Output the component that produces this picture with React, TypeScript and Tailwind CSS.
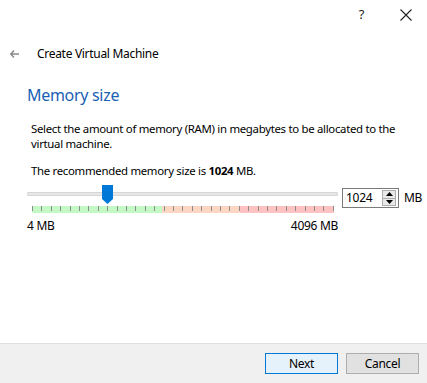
import React from 'react';

const TICKS = Array.from({ length: 33 }, (_, i) => i);

const SpinBox: React.FC<{ value: string }> = ({ value }) => (
  <div className="flex h-[20px] w-[57px] items-center border border-[#7a7a7a] bg-white pl-[3px]">
    <span className="flex-1 text-[12px] leading-none text-black">{value}</span>
    <div className="mr-[2px] flex h-[16px] w-[14px] flex-col border border-[#adadad] bg-[#e8e8e8]">
      <div className="flex flex-1 items-center justify-center border-b border-[#adadad]">
        <svg width="7" height="4" viewBox="0 0 7 4">
          <path d="M0 4 L3.5 0 L7 4 Z" fill="#000" />
        </svg>
      </div>
      <div className="flex flex-1 items-center justify-center">
        <svg width="7" height="4" viewBox="0 0 7 4">
          <path d="M0 0 L7 0 L3.5 4 Z" fill="#000" />
        </svg>
      </div>
    </div>
  </div>
);

const MemorySlider: React.FC<{ value: number; min: number; max: number }> = ({ value, min, max }) => {
  const barWidth = 302;
  const handleLeft = 5 + ((value - min) / (max - min)) * barWidth - 5.5;

  return (
    <div className="relative w-[312px]">
      <div className="h-[4px] w-[311px] rounded-[1px] border border-[#d6d6d6] bg-[#e7e7e7]" />
      <svg
        className="absolute top-[-7px]"
        style={{ left: handleLeft }}
        width="11"
        height="19"
        viewBox="0 0 11 19"
      >
        <path d="M0 0 H11 V14 L5.5 19 L0 14 Z" fill="#0078d7" />
      </svg>
      <div className="relative ml-[5px] mt-[10px] flex h-[7px] w-[302px]">
        <div className="w-[130px] bg-[#c4f8c4]" />
        <div className="w-[78px] bg-[#fdd7c4]" />
        <div className="w-[94px] bg-[#ffc2c2]" />
        {TICKS.map((i) => (
          <div
            key={i}
            className="absolute top-0 h-[5px] w-[1px] bg-[#8c8c8c]"
            style={{ left: Math.round(i * 9.4) }}
          />
        ))}
      </div>
      <div className="mt-[6px] flex w-[311px] justify-between text-[12px] leading-[14px] text-black">
        <span>4 MB</span>
        <span>4096 MB</span>
      </div>
    </div>
  );
};

export default function App() {
  return (
    <div
      className="flex h-[383px] w-[427px] flex-col bg-white tracking-[-0.3px] text-black"
      style={{ fontFamily: '"Noto Sans", "Open Sans", sans-serif' }}
    >
      <div className="flex h-[30px] items-center justify-end pr-[15px]">
        <span className="mr-[36px] text-[13px] text-[#222]">?</span>
        <svg width="12" height="12" viewBox="0 0 12 12">
          <path d="M0.5 0.5 L11.5 11.5 M11.5 0.5 L0.5 11.5" stroke="#222" strokeWidth="1.1" />
        </svg>
      </div>

      <div className="mt-[14px] flex h-[20px] items-center pl-[10px]">
        <svg width="9" height="8" viewBox="0 0 9 8">
          <path d="M4 0.5 L0.8 4 L4 7.5 M0.8 4 H9" stroke="#8a8a8a" strokeWidth="1.4" fill="none" />
        </svg>
        <span className="ml-[18px] text-[12px] text-black">Create Virtual Machine</span>
      </div>

      <div className="flex-1 pl-[27px] pr-[12px]">
        <h1 className="mt-[20px] text-[16px] leading-[22px] text-[#1a5fb4]">Memory size</h1>
        <p className="mt-[15px] pl-[4px] text-[11.4px] leading-[15px] tracking-[-0.3px]">
          Select the amount of memory (RAM) in megabytes to be allocated to the virtual machine.
        </p>
        <p className="mt-[12px] pl-[4px] text-[11.4px] leading-[15px] tracking-[-0.3px]">
          The recommended memory size is <b>1024</b> MB.
        </p>
        <div className="mt-[10px] flex items-start">
          <div className="pt-[4px]">
            <MemorySlider value={1024} min={4} max={4096} />
          </div>
          <div className="ml-[3px]">
            <SpinBox value="1024" />
          </div>
          <span className="ml-[5px] mt-[3px] text-[12px] leading-[14px]">MB</span>
        </div>
      </div>

      <div className="flex h-[40px] items-center justify-end gap-[8px] border-t border-[#dfdfdf] bg-[#f0f0f0] pr-[8px]">
        <button className="h-[21px] w-[73px] border border-[#0078d7] bg-[#e5f1fb] text-[12px] leading-none">
          Next
        </button>
        <button className="h-[21px] w-[73px] border border-[#adadad] bg-[#e1e1e1] text-[12px] leading-none">
          Cancel
        </button>
      </div>
    </div>
  );
}
